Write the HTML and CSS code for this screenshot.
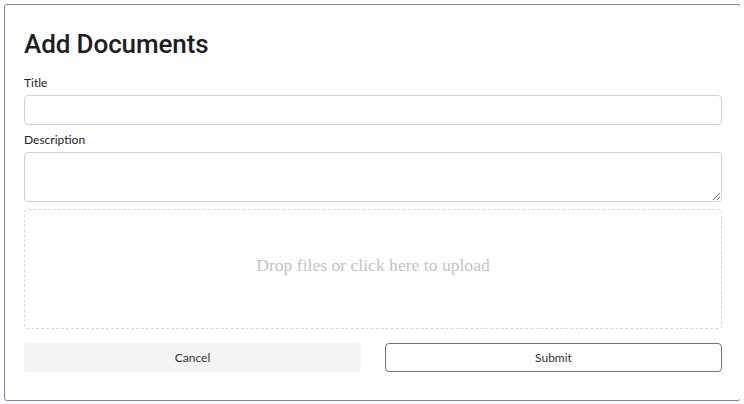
FILE: index.html
```html
<!DOCTYPE html>
<html>
<head>
<meta charset="utf-8">
<link rel="stylesheet" href="styles.css">
</head>
<body>
<div class="card">
  <h1 class="title">Add Documents</h1>
  <label class="label">Title</label>
  <input class="input" type="text">
  <label class="label">Description</label>
  <textarea class="textarea"></textarea>
  <div class="dropzone">Drop files or click here to upload</div>
  <div class="actions">
    <button class="btn btn-cancel">Cancel</button>
    <button class="btn btn-submit">Submit</button>
  </div>
</div>
</body>
</html>
```

FILE: styles.css
```css
html, body { background: #fff; }
body { margin: 4px; font-family: Lato, "Open Sans", sans-serif; }
.card {
  border: 1px solid #7f7fc4;
  border-radius: 3px;
  padding: 20px 18px 27px 19px;
  display: flex;
  flex-direction: column;
  box-sizing: border-box;
  height: 397px;
  width: 737px;
}
.title {
  font-family: Roboto, sans-serif;
  font-weight: 500;
  font-size: 26px;
  letter-spacing: -0.1px;
  color: #1d1d24;
  margin: 4px 0 0 0;
  line-height: 30px;
}
.label {
  font-size: 12px;
  color: #222;
  line-height: 14px;
  margin-bottom: 5px;
}
.title + .label { margin-top: 17px; }
.input {
  height: 30px;
  box-sizing: border-box;
  border: 1px solid #cfcfd6;
  border-radius: 4px;
  margin: 0;
  font: inherit;
}
.textarea {
  height: 50px;
  box-sizing: border-box;
  border: 1px solid #cfcfd6;
  border-radius: 4px;
  margin: 0;
  font: inherit;
}
.input + .label { margin-top: 8px; }
.dropzone {
  margin-top: 7px;
  height: 120px;
  box-sizing: border-box;
  border: 1px dashed #d8d8d8;
  border-radius: 4px;
  display: flex;
  align-items: center;
  justify-content: center;
  font-family: "Liberation Serif", serif;
  font-size: 17.6px;
  color: #c4c4c4;
  padding-bottom: 8px;
}
.actions {
  margin-top: 14px;
  display: flex;
  gap: 24px;
}
.btn {
  flex: 1;
  height: 29px;
  border-radius: 4px;
  font-family: Lato, sans-serif;
  font-size: 12px;
  color: #333;
  cursor: pointer;
}
.btn-cancel { background: #f4f4f4; border: 1px solid #f4f4f4; }
.btn-submit { background: #fff; border: 1px solid #6e6aae; }
```
